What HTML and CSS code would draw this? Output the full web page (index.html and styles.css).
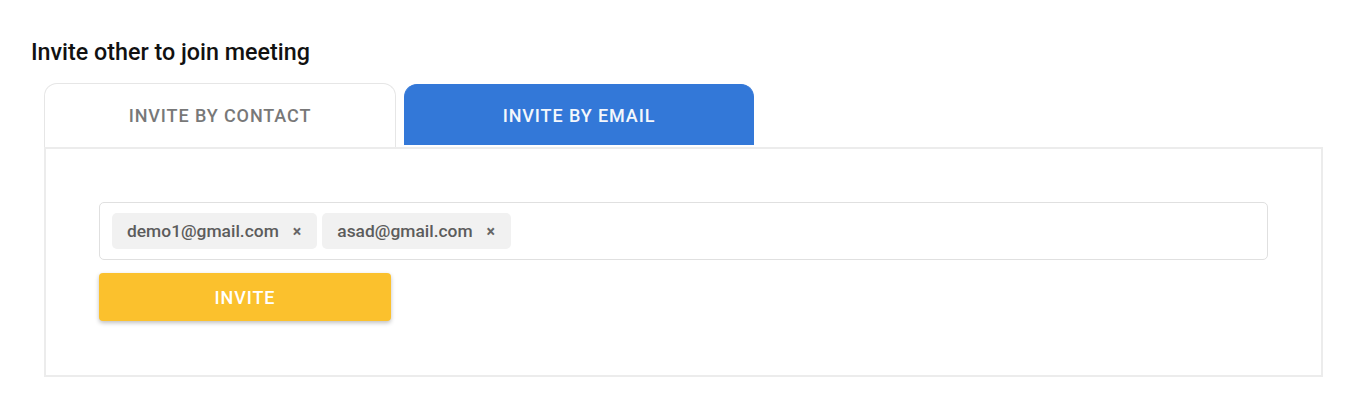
FILE: index.html
```html
<!DOCTYPE html>
<html>
<head>
<meta charset="utf-8">
<link rel="stylesheet" href="styles.css">
</head>
<body>
<div class="page">
  <h2 class="title">Invite other to join meeting</h2>
  <div class="tabs-wrap">
    <div class="tabs">
      <div class="tab">INVITE BY CONTACT</div>
      <div class="tab active">INVITE BY EMAIL</div>
    </div>
    <div class="panel">
      <div class="chips-input">
        <span class="chip">demo1@gmail.com<span class="x">×</span></span>
        <span class="chip">asad@gmail.com<span class="x">×</span></span>
      </div>
      <button class="invite">INVITE</button>
    </div>
  </div>
</div>
</body>
</html>
```

FILE: styles.css
```css
* { box-sizing: border-box; }
html, body { margin: 0; padding: 0; background: #fff; }
body { font-family: Roboto, "Noto Sans", "Liberation Sans", sans-serif; }
.page { padding: 38px 0 0 31px; }
.title {
  margin: 0;
  font-size: 23.3px;
  font-weight: 500;
  color: #111;
  line-height: 28px;
}
.tabs-wrap { margin: 17px 0 0 13px; width: 1279px; }
.tabs { display: flex; gap: 8px; align-items: flex-end; height: 64px; }
.tab {
  width: 352px;
  height: 64px;
  border: 1px solid #e6e6e6;
  border-bottom: none;
  border-radius: 13px 13px 0 0;
  display: flex;
  align-items: center;
  justify-content: center;
  font-size: 18px;
  font-weight: 500;
  letter-spacing: 0.9px;
  color: #787878;
}
.tab.active {
  width: 350px;
  height: 61px;
  margin-bottom: 2px;
  background: #3378d8;
  border-color: #3378d8;
  color: #f4f7fc;
}
.panel {
  border: 2px solid #ececec;
  height: 230px;
  padding: 53px 53px 0 53px;
}
.chips-input {
  height: 58px;
  border: 1px solid #e0e0e0;
  border-radius: 5px;
  display: flex;
  align-items: center;
  gap: 5px;
  padding: 0 12px;
}
.chip {
  display: inline-flex;
  align-items: center;
  height: 36px;
  background: #f1f1f1;
  border-radius: 5px;
  padding: 0 16px 0 15px;
  font-size: 17.4px;
  font-weight: 500;
  color: #5c5c5c;
}
.chip .x { margin-left: 14px; font-size: 16px; font-weight: 700; color: #666; }
.invite {
  margin-top: 13px;
  width: 292px;
  height: 48px;
  border: none;
  border-radius: 4px;
  background: #fbc12d;
  color: #fff;
  font-family: inherit;
  font-size: 18px;
  font-weight: 500;
  letter-spacing: 0.9px;
  box-shadow: 0 2px 4px rgba(0,0,0,0.25);
  display: block;
}
```
